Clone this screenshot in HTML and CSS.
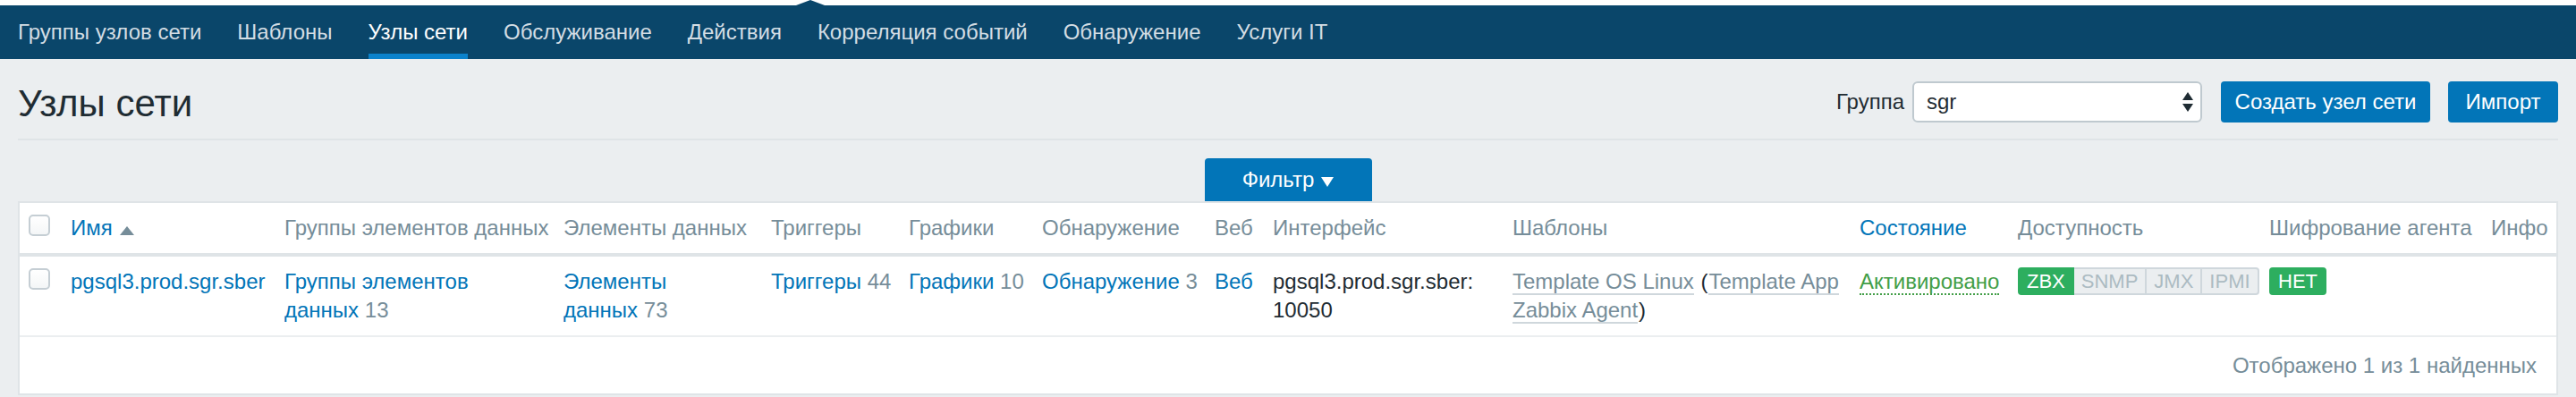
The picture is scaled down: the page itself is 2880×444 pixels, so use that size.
FILE: index.html
```html
<!DOCTYPE html>
<html lang="ru">
<head>
<meta charset="utf-8">
<title>Узлы сети</title>
<link rel="stylesheet" href="styles.css">
</head>
<body>
<div class="topstrip"><span class="notch"></span></div>
<nav class="subnav">
  <a href="#">Группы узлов сети</a>
  <a href="#">Шаблоны</a>
  <a href="#" class="active">Узлы сети</a>
  <a href="#">Обслуживание</a>
  <a href="#">Действия</a>
  <a href="#">Корреляция событий</a>
  <a href="#">Обнаружение</a>
  <a href="#">Услуги IT</a>
</nav>
<main class="page">
  <header class="page-header">
    <h1>Узлы сети</h1>
    <div class="controls">
      <span class="ctl-label">Группа</span>
      <div class="select">
        <span>sgr</span>
        <svg class="sel-arrows" width="12" height="22" viewBox="0 0 12 22"><path d="M6 0 L12 9 L0 9 Z M0 13 L12 13 L6 22 Z" fill="#1f2c33"/></svg>
      </div>
      <button class="btn btn-create">Создать узел сети</button>
      <button class="btn btn-import">Импорт</button>
    </div>
  </header>
  <div class="filter-row">
    <div class="filter-tab">Фильтр <span class="arrow-down"></span></div>
  </div>
  <div class="list">
    <table>
      <colgroup>
        <col class="c0"><col class="c1"><col class="c2"><col class="c3"><col class="c4"><col class="c5"><col class="c6"><col class="c7"><col class="c8"><col class="c9"><col class="c10"><col class="c11"><col class="c12"><col class="c13">
      </colgroup>
      <thead>
        <tr>
          <th><span class="checkbox"></span></th>
          <th><a href="#">Имя</a><span class="arrow-up"></span></th>
          <th>Группы элементов данных</th>
          <th>Элементы данных</th>
          <th>Триггеры</th>
          <th>Графики</th>
          <th>Обнаружение</th>
          <th>Веб</th>
          <th>Интерфейс</th>
          <th>Шаблоны</th>
          <th><a href="#">Состояние</a></th>
          <th>Доступность</th>
          <th>Шифрование агента</th>
          <th>Инфо</th>
        </tr>
      </thead>
      <tbody>
        <tr>
          <td><span class="checkbox"></span></td>
          <td><a href="#">pgsql3.prod.sgr.sber</a></td>
          <td><a href="#">Группы элементов <span class="nw">данных</span></a><span class="cnt">&nbsp;13</span></td>
          <td><a href="#">Элементы <span class="nw">данных</span></a><span class="cnt">&nbsp;73</span></td>
          <td class="nowrap"><a href="#">Триггеры</a><span class="cnt"> 44</span></td>
          <td class="nowrap"><a href="#">Графики</a><span class="cnt"> 10</span></td>
          <td class="nowrap"><a href="#">Обнаружение</a><span class="cnt"> 3</span></td>
          <td><a href="#">Веб</a></td>
          <td><span class="nw">pgsql3.prod.sgr.sber:</span><wbr><span class="nw">10050</span></td>
          <td><a href="#" class="tpl">Template OS Linux</a> <span class="paren">(</span><a href="#" class="tpl"><span class="nw">Template App</span> <span class="nw">Zabbix Agent</span></a><span class="paren">)</span></td>
          <td><a href="#" class="enabled">Активировано</a></td>
          <td>
            <div class="status-group">
              <span class="st on">ZBX</span><span class="st off">SNMP</span><span class="st off">JMX</span><span class="st off">IPMI</span>
            </div>
          </td>
          <td><div class="status-group"><span class="st on">НЕТ</span></div></td>
          <td></td>
        </tr>
      </tbody>
    </table>
    <div class="paging">Отображено 1 из 1 найденных</div>
  </div>
</main>
</body>
</html>
```
FILE: styles.css
```css
* { box-sizing: border-box; }
html, body { margin: 0; padding: 0; }
body {
  background: #ebeef0;
  font-family: "Liberation Sans", Arial, sans-serif;
  font-size: 24px;
  line-height: 32px;
  color: #1f2c33;
}
a { color: #0275b8; text-decoration: none; }

.topstrip {
  height: 6px;
  background: #fff;
  display: flex;
  align-items: flex-end;
}
.notch {
  width: 0; height: 0;
  border-left: 16px solid transparent;
  border-right: 16px solid transparent;
  border-bottom: 6px solid #0a466a;
  margin-left: 890px;
}

.subnav {
  background: #0a466a;
  height: 60px;
  display: flex;
  gap: 40px;
  padding: 0 20px;
}
.subnav a {
  display: flex;
  align-items: center;
  color: #d3dde4;
  padding-top: 6px;
  border-bottom: 6px solid transparent;
  white-space: nowrap;
}
.subnav a.active {
  color: #fff;
  border-bottom-color: #0b82cb;
}

.page { padding: 0 20px; }

.page-header {
  display: flex;
  align-items: center;
  justify-content: space-between;
  padding: 21px 0 15px;
  border-bottom: 2px solid #dfe4e7;
}
.page-header h1 {
  margin: 5px 0 0;
  font-size: 42px;
  line-height: 48px;
  font-weight: normal;
  color: #1f2c33;
}
.controls {
  display: flex;
  align-items: center;
}
.ctl-label { margin-right: 9px; }
.select {
  width: 324px;
  height: 46px;
  background: #fff;
  border: 2px solid #bfc9cf;
  border-radius: 6px;
  display: flex;
  align-items: center;
  justify-content: space-between;
  padding: 0 8px 0 14px;
  margin-right: 21px;
}
.sel-arrows { display: block; }
.btn {
  height: 46px;
  padding: 0;
  border: none;
  border-radius: 4px;
  background: #0275b8;
  color: #fff;
  font-family: inherit;
  font-size: 24px;
  white-space: nowrap;
}
.btn-create { width: 234px; }
.btn-import { width: 123px; margin-left: 20px; }

.filter-row {
  display: flex;
  justify-content: center;
  margin-top: 20px;
}
.filter-tab {
  width: 187px;
  height: 48px;
  background: #0275b8;
  color: #fff;
  border-radius: 4px 4px 0 0;
  display: flex;
  align-items: center;
  justify-content: center;
  gap: 8px;
}
.arrow-down {
  width: 0; height: 0;
  border-left: 7px solid transparent;
  border-right: 7px solid transparent;
  border-top: 11px solid #fff;
  margin-top: 4px;
}
.arrow-up {
  display: inline-block;
  width: 0; height: 0;
  border-left: 8px solid transparent;
  border-right: 8px solid transparent;
  border-bottom: 10px solid #768d99;
  margin-left: 8px;
}

.list {
  background: #fff;
  border: 2px solid #dfe4e7;
}
table {
  width: 100%;
  table-layout: fixed;
  border-collapse: separate;
  border-spacing: 0;
}
.c0 { width: 47px; }
.c1 { width: 239px; }
.c2 { width: 312px; }
.c3 { width: 232px; }
.c4 { width: 154px; }
.c5 { width: 149px; }
.c6 { width: 193px; }
.c7 { width: 65px; }
.c8 { width: 268px; }
.c9 { width: 388px; }
.c10 { width: 177px; }
.c11 { width: 281px; }
.c12 { width: 248px; }
.c13 { width: 83px; }

th, td {
  padding: 12px 10px;
  text-align: left;
  vertical-align: top;
  line-height: 32px;
}
th {
  font-weight: normal;
  color: #768d99;
  white-space: nowrap;
  border-bottom: 4px solid #dfe4e7;
}
td { border-bottom: 2px solid #ebeef0; }
td.nowrap { white-space: nowrap; }

.checkbox {
  display: block;
  width: 24px;
  height: 24px;
  border: 2px solid #c5ced4;
  border-radius: 5px;
  background: linear-gradient(#fff, #f4f6f7);
  margin-top: 1px;
}
.cnt { color: #768d99; }
.nw { white-space: nowrap; }
.tpl {
  color: #768d99;
  border-bottom: 2px solid #cfd7dc;
}
.paren { margin: 0 1px; }
.enabled {
  color: #429e47;
  border-bottom: 2px dotted #429e47;
}

.status-group {
  display: flex;
}
.st {
  font-size: 22px;
  line-height: 27px;
  padding: 0 8px;
  border: 2px solid #cfd7dc;
  border-left-width: 0;
  background: #ebeef0;
  color: #acbbc2;
}
.st:first-child { border-left-width: 2px; border-radius: 4px 0 0 4px; }
.st:last-child { border-radius: 0 4px 4px 0; }
.st:only-child { border-radius: 4px; }
.st.on {
  background: #2dae5f;
  border-color: #2dae5f;
  color: #fff;
}

.paging {
  text-align: right;
  padding: 16px 22px 15px;
  line-height: 32px;
  color: #768d99;
}
```
